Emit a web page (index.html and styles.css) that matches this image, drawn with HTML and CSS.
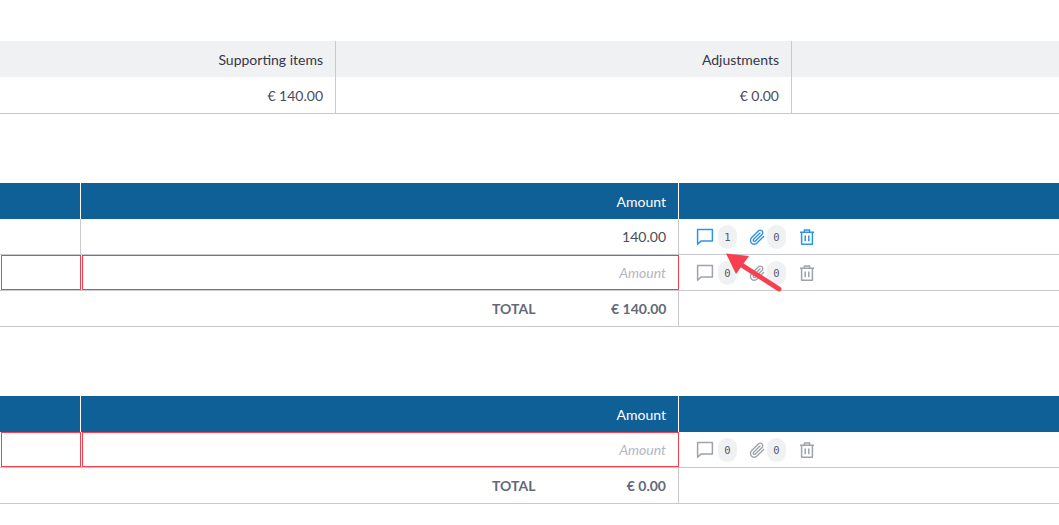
FILE: index.html
```html
<!DOCTYPE html>
<html lang="en">
<head>
<meta charset="utf-8">
<title>Expense</title>
<link rel="stylesheet" href="styles.css">
</head>
<body>
<svg class="sprite" width="0" height="0" aria-hidden="true">
  <defs>
    <symbol id="i-comment" viewBox="0 0 18 18"><path d="M1.6 1.6H16.4V12.9H5.2L1.6 16.2Z" fill="none" stroke="currentColor" stroke-width="1.5" stroke-linejoin="round"/></symbol>
    <symbol id="i-clip" viewBox="0 0 18 18"><path d="M15.6 8.2 9 14.8a3.7 3.7 0 0 1-5.5-5.2l6.9-6.9a2.5 2.5 0 0 1 3.6 3.5L7.4 12.8a1.2 1.2 0 0 1-1.8-1.7L12 4.8" transform="translate(0 .2)" fill="none" stroke="currentColor" stroke-width="1.4" stroke-linecap="round" stroke-linejoin="round"/></symbol>
    <symbol id="i-trash" viewBox="0 0 18 18"><path d="M2 4.2H16M6.4 4V1.9H11.6V4M3.6 4.4V16.2H14.4V4.4M7.2 7.4V13.2M10.8 7.4V13.2" fill="none" stroke="currentColor" stroke-width="1.5" stroke-linejoin="round"/></symbol>
  </defs>
</svg>

<section class="summary">
  <div class="summary-grid">
    <div class="sh"></div>
    <div class="sh">Supporting items</div>
    <div class="sh">Adjustments</div>
    <div class="sh"></div>
    <div class="sc"></div>
    <div class="sc">€ 140.00</div>
    <div class="sc">€ 0.00</div>
    <div class="sc"></div>
  </div>
</section>

<section class="block block-first">
  <div class="grid">
    <div class="th"></div>
    <div class="th">Amount</div>
    <div class="th"></div>

    <div class="td"></div>
    <div class="td value">140.00</div>
    <div class="td actions active">
      <svg class="ic"><use href="#i-comment"/></svg><span class="pill">1</span>
      <svg class="ic clip"><use href="#i-clip"/></svg><span class="pill">0</span>
      <svg class="ic trash"><use href="#i-trash"/></svg>
    </div>

    <div class="td"><div class="input"></div></div>
    <div class="td"><div class="input">Amount</div></div>
    <div class="td actions">
      <svg class="ic"><use href="#i-comment"/></svg><span class="pill">0</span>
      <svg class="ic clip"><use href="#i-clip"/></svg><span class="pill">0</span>
      <svg class="ic trash"><use href="#i-trash"/></svg>
    </div>

    <div class="td total">
      <div class="total-row"><span class="total-label">TOTAL</span><span class="total-val">€ 140.00</span></div>
    </div>
    <div class="td"></div>
  </div>
  <svg class="arrow" width="60" height="42" viewBox="0 0 60 42" aria-hidden="true">
    <path d="M53 37 14 12" stroke="#f6404f" stroke-width="5" stroke-linecap="round"/>
    <path d="M0 1.500 23 4 10 22Z" fill="#f6404f"/>
  </svg>
</section>

<section class="block block-second">
  <div class="grid">
    <div class="th"></div>
    <div class="th">Amount</div>
    <div class="th"></div>

    <div class="td"><div class="input"></div></div>
    <div class="td"><div class="input">Amount</div></div>
    <div class="td actions">
      <svg class="ic"><use href="#i-comment"/></svg><span class="pill">0</span>
      <svg class="ic clip"><use href="#i-clip"/></svg><span class="pill">0</span>
      <svg class="ic trash"><use href="#i-trash"/></svg>
    </div>

    <div class="td total">
      <div class="total-row narrow"><span class="total-label">TOTAL</span><span class="total-val">€ 0.00</span></div>
    </div>
    <div class="td"></div>
  </div>
</section>
</body>
</html>
```
FILE: styles.css
```css
* { box-sizing: border-box; }
html, body { margin: 0; padding: 0; background: #fff; overflow: hidden; }
body {
  width: 1059px;
  height: 525px;
  font-family: Lato, "Liberation Sans", sans-serif;
  font-size: 14px;
  color: #3d4152;
}
.sprite { position: absolute; }

.summary { padding-top: 41px; }
.summary-grid {
  display: grid;
  grid-template-columns: 80px 256px 456px 1fr;
  grid-template-rows: 36px 37px;
}
.sh, .sc {
  display: flex;
  align-items: center;
  justify-content: flex-end;
  padding-right: 12px;
  border-right: 1px solid #c9cad0;
}
.sh:nth-child(1), .sc:nth-child(5) { border-right: 0; }
.sh { background: #f0f1f3; color: #343746; }
.sc { border-bottom: 1px solid #c9cad0; color: #494c5a; }
.sh:last-child, .sc:last-child { border-right: 0; }
.summary-grid > :nth-child(4), .summary-grid > :nth-child(8) { border-right: 0; }

.block { position: relative; }
.block-first { margin-top: 69px; }
.block-second { margin-top: 69px; }

.grid {
  display: grid;
  grid-template-columns: 81px 598px 1fr;
  grid-auto-rows: 36px;
}
.th {
  background: #106098;
  color: #fff;
  border-right: 1px solid #fff;
  display: flex;
  align-items: center;
  justify-content: flex-end;
  padding-right: 12px;
}
.th:nth-child(3) { border-right: 0; }
.td {
  border-right: 1px solid #c9cad0;
  border-bottom: 1px solid #c9cad0;
  display: flex;
  align-items: center;
  justify-content: flex-end;
}
.td:nth-child(3n) { border-right: 0; }
.grid > .td:last-child { border-right: 0; }
.value { padding-right: 12px; color: #494c5a; }

.input {
  width: 100%;
  height: 35px;
  margin-right: -1px;
  border: 1px solid #f4414f;
  display: flex;
  align-items: center;
  justify-content: flex-end;
  padding-right: 12px;
  font-style: italic;
  color: #b4b6bf;
}
.td:has(> .input) { border-right-color: #c9cad0; align-items: flex-start; }

.actions {
  justify-content: flex-start;
  padding-left: 17px;
  color: #9da2ae;
}
.actions.active { color: #2f93e3; }
.ic { width: 18px; height: 18px; flex: none; }
.clip { margin-left: 11px; }
.trash { margin-left: 12px; }
.pill {
  width: 19px;
  height: 24px;
  margin-left: 4px;
  border-radius: 10px;
  background: #f0f1f3;
  color: #55586a;
  font-family: "DejaVu Sans Mono", "Liberation Mono", monospace;
  font-size: 10.500px;
  display: flex;
  align-items: center;
  justify-content: center;
}
.clip + .pill { margin-left: 1px; }

.total {
  grid-column: 1 / span 2;
  font-weight: 700;
  color: #656878;
}
.total-row { display: flex; align-items: center; padding-right: 12px; }
.total-label { width: 119px; }
.total-val { width: 55px; text-align: right; white-space: nowrap; }
.narrow .total-label { width: 119px; }
.narrow .total-val { width: 55px; }
.narrow { padding-right: 12px; }

.arrow { position: absolute; left: 726px; top: 69px; }
```
